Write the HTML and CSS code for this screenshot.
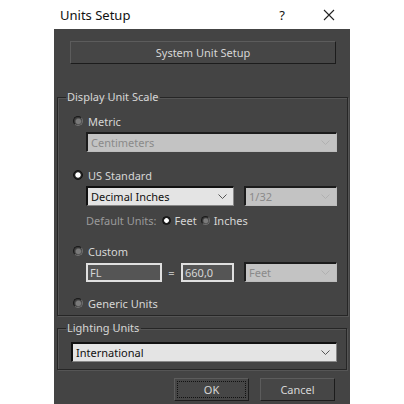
FILE: index.html
```html
<!DOCTYPE html>
<html lang="en">
<head>
    <meta charset="UTF-8">
    <title>Units Setup</title>
    <link rel="stylesheet" href="styles.css">
</head>
<body>
    <div class="dialog">
        <div class="titlebar">
            <span class="title">Units Setup</span>
            <span class="help">?</span>
            <svg class="close" width="12" height="12" viewBox="0 0 12 12">
                <path d="M1 1L11 11M11 1L1 11" stroke="#222" stroke-width="1.1" fill="none"/>
            </svg>
        </div>

        <div class="panel">
            <div class="btn sys-btn">System Unit Setup</div>

            <fieldset class="group display-group">
                <legend>Display Unit Scale</legend>

                <div class="radio-row first">
                    <span class="radio"></span><span>Metric</span>
                </div>
                <div class="select wide disabled">
                    <span>Centimeters</span>
                    <svg class="chev" width="9" height="6" viewBox="0 0 9 6"><path d="M0.5 0.5L4.5 4.5L8.5 0.5" stroke="#b0b0b0" fill="none"/></svg>
                </div>

                <div class="radio-row">
                    <span class="radio checked"></span><span>US Standard</span>
                </div>
                <div class="pair">
                    <div class="select half">
                        <span>Decimal Inches</span>
                        <svg class="chev" width="9" height="6" viewBox="0 0 9 6"><path d="M0.5 0.5L4.5 4.5L8.5 0.5" stroke="#555" fill="none"/></svg>
                    </div>
                    <div class="select small disabled">
                        <span>1/32</span>
                        <svg class="chev" width="9" height="6" viewBox="0 0 9 6"><path d="M0.5 0.5L4.5 4.5L8.5 0.5" stroke="#b0b0b0" fill="none"/></svg>
                    </div>
                </div>
                <div class="default-units">
                    <span class="muted">Default Units:</span>
                    <span class="radio sm checked"></span><span>Feet</span>
                    <span class="radio sm"></span><span>Inches</span>
                </div>

                <div class="radio-row custom">
                    <span class="radio"></span><span>Custom</span>
                </div>
                <div class="pair custom-fields">
                    <div class="field fl">FL</div>
                    <span class="eq">=</span>
                    <div class="field num">660,0</div>
                    <div class="select small disabled">
                        <span>Feet</span>
                        <svg class="chev" width="9" height="6" viewBox="0 0 9 6"><path d="M0.5 0.5L4.5 4.5L8.5 0.5" stroke="#b0b0b0" fill="none"/></svg>
                    </div>
                </div>

                <div class="radio-row generic">
                    <span class="radio"></span><span>Generic Units</span>
                </div>
            </fieldset>

            <fieldset class="group lighting-group">
                <legend>Lighting Units</legend>
                <div class="select full">
                    <span>International</span>
                    <svg class="chev" width="9" height="6" viewBox="0 0 9 6"><path d="M0.5 0.5L4.5 4.5L8.5 0.5" stroke="#555" fill="none"/></svg>
                </div>
            </fieldset>

            <div class="actions">
                <div class="btn ok"><span class="focus">OK</span></div>
                <div class="btn cancel">Cancel</div>
            </div>
        </div>
    </div>
</body>
</html>
```

FILE: styles.css
```css
* {
    box-sizing: border-box;
    margin: 0;
    padding: 0;
}

body {
    background: #ffffff;
    font-family: 'Noto Sans', 'Open Sans', sans-serif;
    font-size: 11px;
    color: #d6d6d6;
}

.dialog {
    width: 296px;
    margin-left: 54px;
    height: 404px;
    display: flex;
    flex-direction: column;
}

.titlebar {
    height: 29px;
    display: flex;
    align-items: center;
    background: #ffffff;
    color: #111;
}

.title {
    font-size: 13px;
    margin-left: 6px;
}

.help {
    font-size: 13px;
    margin-left: auto;
    margin-right: 38px;
}

.close {
    margin-right: 15px;
}

.panel {
    flex: 1;
    background: #444444;
    padding: 12px 3px 0 3px;
}

.btn {
    display: flex;
    align-items: center;
    justify-content: center;
    height: 23px;
    background: #464646;
    border: 1px solid;
    border-color: #5c5c5c #1c1c1c #1c1c1c #5c5c5c;
    color: #d6d6d6;
}

.sys-btn {
    margin: 0 11px 0 13px;
}

.group {
    border: 1px solid #262626;
    box-shadow: 1px 1px 0 #555, inset 1px 1px 0 #555;
    padding: 0 10px 0 15px;
}

.group legend {
    margin-left: -7px;
    padding: 0 2px 0 1px;
    line-height: 14px;
}

.display-group {
    margin-top: 26px;
    height: 226px;
}

.radio-row {
    display: flex;
    align-items: center;
    gap: 5px;
    height: 16px;
}

.radio-row.first {
    margin-top: 9px;
}

.radio {
    width: 10px;
    height: 10px;
    border-radius: 50%;
    background: radial-gradient(circle at 55% 55%, #7a7a7a 0 35%, #3a3a3a 60%);
    border: 1px solid #1a1a1a;
    border-right-color: #707070;
    border-bottom-color: #707070;
    flex-shrink: 0;
}

.radio.checked {
    background: radial-gradient(circle, #ffffff 0 40%, #222 55%);
    border-color: #111;
}

.radio.sm {
    width: 9px;
    height: 9px;
}

.select {
    display: flex;
    align-items: center;
    justify-content: space-between;
    height: 20px;
    padding: 0 6px 0 3px;
    background: #e4e4e4;
    color: #111;
    border: 2px solid #111;
    border-right: 1px solid #888;
    border-bottom: 1px solid #888;
}

.select.disabled {
    background: #c3c3c3;
    color: #8a8a8a;
    border-color: #1c1c1c #bdbdbd #bdbdbd #1c1c1c;
}

.wide {
    margin: 3px 0 0 13px;
}

.wide + .radio-row {
    margin-top: 15px;
}

.pair {
    display: flex;
    align-items: center;
    margin-left: 13px;
}

.radio-row + .pair {
    margin-top: 3px;
}

.half {
    width: 148px;
}

.small {
    width: 93px;
    margin-left: 10px;
}

.default-units {
    display: flex;
    align-items: center;
    height: 16px;
    margin: 6px 0 0 13px;
    gap: 4px;
}

.muted {
    color: #9a9a9a;
    margin-right: 1px;
}

.radio-row.custom {
    margin-top: 15px;
}

.custom-fields .field {
    height: 19px;
    background: #555;
    border: 2px solid #e0e0e0;
    color: #d6d6d6;
    padding-left: 2px;
    line-height: 15px;
}

.fl {
    width: 76px;
}

.eq {
    width: 19px;
    text-align: center;
    color: #bbb;
}

.num {
    width: 53px;
}

.radio-row.generic {
    margin-top: 13px;
}

.lighting-group {
    margin-top: 5px;
    height: 49px;
}

.full {
    margin: 7px -1px 0 -2px;
}

.actions {
    display: flex;
    justify-content: flex-end;
    gap: 11px;
    margin: 8px 12px 0 0;
}

.actions .btn {
    width: 75px;
}

.ok {
    padding: 2px;
}

.focus {
    flex: 1;
    height: 100%;
    display: flex;
    align-items: center;
    justify-content: center;
    border: 1px dotted #111;
}
```
